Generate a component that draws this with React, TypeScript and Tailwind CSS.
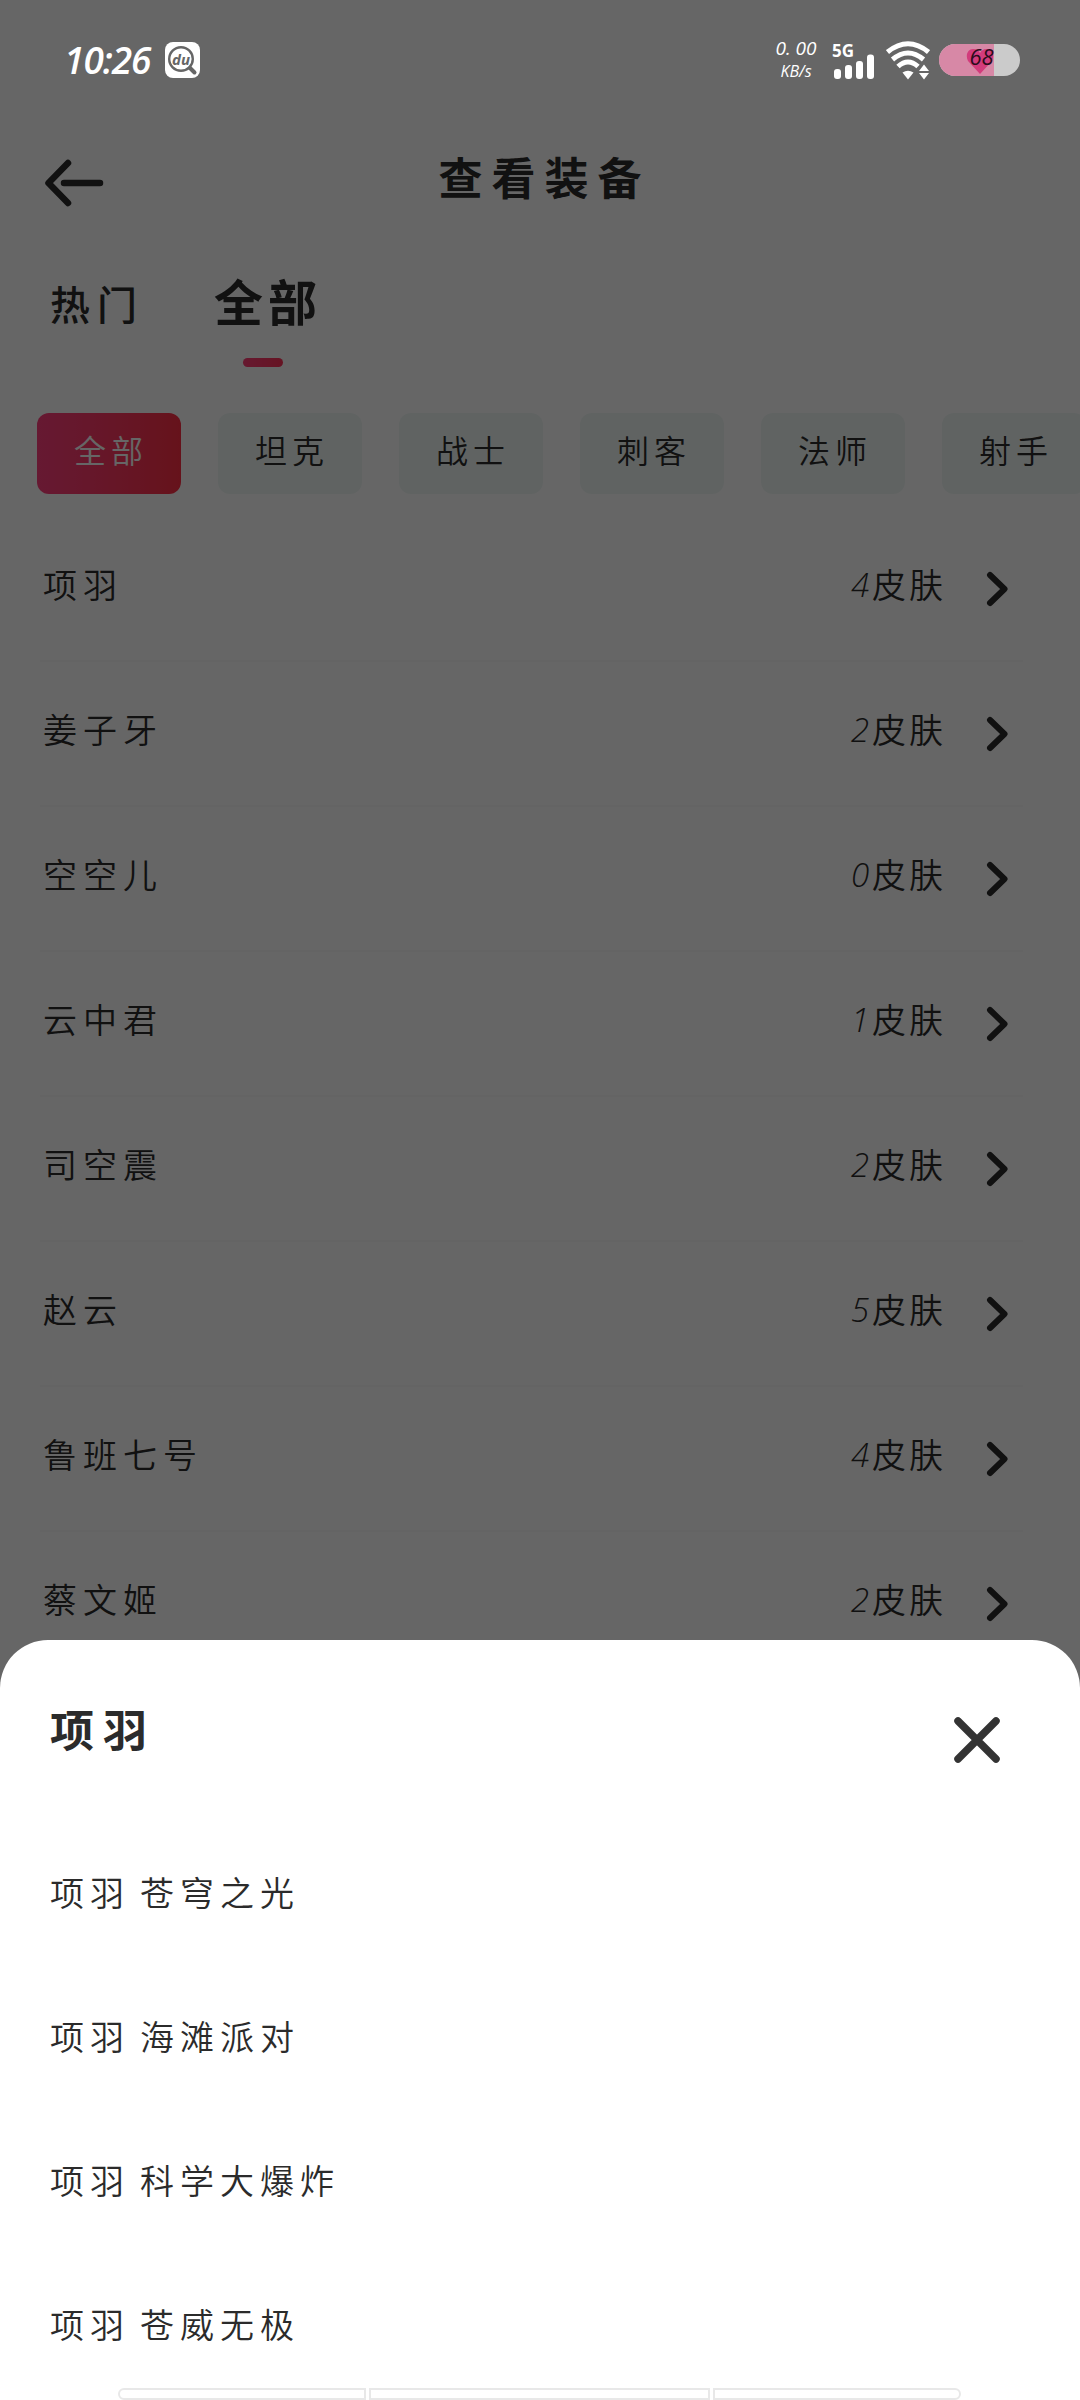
import { clsx } from "clsx";

const tags = ["全部", "坦克", "战士", "刺客", "法师", "射手"];

const heroes = [
  { name: "项羽", skins: 4 },
  { name: "姜子牙", skins: 2 },
  { name: "空空儿", skins: 0 },
  { name: "云中君", skins: 1 },
  { name: "司空震", skins: 2 },
  { name: "赵云", skins: 5 },
  { name: "鲁班七号", skins: 4 },
  { name: "蔡文姬", skins: 2 },
];

const skins = ["苍穹之光", "海滩派对", "科学大爆炸", "苍威无极"];

export default function App() {
  return (
    <div className="relative flex h-[2400px] w-[1080px] flex-col overflow-hidden bg-white font-['Noto_Sans_CJK_SC',sans-serif] text-[#2b2b2b]">
      <div className="h-[120px] shrink-0" />
      <Header />
      <Tabs />
      <TagBar />
      <HeroList />

      {/* dimmed backdrop, the status bar stays lit above it */}
      <div className="absolute inset-0 bg-black/60" />
      <StatusBar />
      <SkinSheet />
    </div>
  );
}

function StatusBar() {
  return (
    <div className="absolute inset-x-0 top-0 flex h-[120px] items-center justify-between pr-[60px] pl-[64px] text-white">
      <div className="flex items-center gap-[13px]">
        <span className="w-[88px] text-[37px] leading-[40px] font-semibold tracking-[-1px] whitespace-nowrap italic font-['Open_Sans',sans-serif]">
          10:26
        </span>
        <div className="relative flex h-[36px] w-[35px] items-center justify-center rounded-[8px] bg-white">
          <svg viewBox="0 0 35 36" className="absolute inset-0 size-full">
            <circle cx="16" cy="17" r="11.8" fill="none" stroke="#666" strokeWidth="2.4" />
            <path d="M25 26l4.500 4.500" stroke="#666" strokeWidth="4" strokeLinecap="round" />
          </svg>
          <span className="relative -top-[1px] -left-[1.5px] text-[15px] leading-[20px] font-bold text-[#666] italic font-['Open_Sans',sans-serif]">
            du
          </span>
        </div>
      </div>

      <div className="flex items-center">
        <div className="flex w-[44px] flex-col items-center pb-[2px] font-medium italic font-['Open_Sans',sans-serif]">
          <span className="text-[19px] leading-[23px] whitespace-nowrap">0. 00</span>
          <span className="text-[16px] leading-[22px] whitespace-nowrap">KB/s</span>
        </div>
        <div className="mt-[-1px] ml-[14px] flex w-[44px] flex-col">
          <span className="-mb-[9px] text-[17px] leading-[24px] font-bold font-['Open_Sans',sans-serif]">
            5G
          </span>
          <svg viewBox="0 0 44 26" className="h-[26px] w-[44px]" fill="#fff">
            <rect x="2" y="15" width="7" height="10" rx="3" />
            <rect x="13" y="11" width="7" height="14" rx="3" />
            <rect x="24" y="7" width="7" height="18" rx="3" />
            <rect x="35" y="0.500" width="7" height="24.500" rx="3" />
          </svg>
        </div>
        <svg viewBox="0 0 44 40" className="ml-[10px] h-[40px] w-[44px]" fill="none" stroke="#fff" strokeWidth="5">
          <path d="M1.500 12Q22 -4.500 42.500 12" />
          <path d="M6.500 19.500Q22 6.500 37.500 19.500" />
          <path d="M12 26.500Q22 17.500 32 26.500" />
          <path d="M16.500 32.500Q22 29 27.500 32.500L22 39.500z" fill="#fff" stroke="none" />
          <path d="M38 24.500l5 6.500h-10zM38 39.500l5-6.500h-10z" fill="#fff" stroke="none" />
        </svg>
        <div className="relative ml-[9px] flex h-[32px] w-[81px] items-center justify-center rounded-full bg-[#cbcbcb]">
          <div className="absolute inset-y-0 left-0 w-[55px] rounded-l-full bg-[#d788a6]" />
          <svg viewBox="0 0 28 26" className="absolute top-[4px] left-[27px] h-[26px] w-[28px]">
            <path d="M14 26L2 13C-1 7 2 1 7 1c4 0 6 2 7 4 1-2 3-4 7-4 5 0 8 6 5 12z" fill="#d23c7c" />
          </svg>
          <span className="relative -top-[4px] left-[2px] text-[22px] leading-[30px] text-[#2b0c1c] italic font-['Open_Sans',sans-serif]">
            68
          </span>
        </div>
      </div>
    </div>
  );
}

function Header() {
  return (
    <header className="flex h-[126px] shrink-0 items-center justify-between px-[44px]">
      <svg
        viewBox="0 0 60 48"
        className="h-[48px] w-[60px]"
        fill="none"
        stroke="currentColor"
        strokeWidth="6.500"
        strokeLinecap="round"
        strokeLinejoin="round"
      >
        <path d="M24 4L4.500 24L24 44M20 24h36" />
      </svg>
      <h1 className="pb-[15px] pl-[9px] text-[44px] leading-none font-bold tracking-[9px]">查看装备</h1>
      <div className="w-[60px]" />
    </header>
  );
}

function Tabs() {
  return (
    <nav className="flex h-[167px] shrink-0 gap-[70px] pt-[26px] pl-[50px]">
      <span className="pt-[5px] text-[40px] leading-[52px] font-medium tracking-[7px]">热门</span>
      <div className="flex flex-col items-center">
        <span className="text-[49px] leading-[56px] font-bold tracking-[5px]">全部</span>
        <span className="mt-[30px] mr-[11px] h-[9px] w-[40px] rounded-full bg-linear-to-r from-[#ff3f77] to-[#ff3258]" />
      </div>
    </nav>
  );
}

function TagBar() {
  return (
    <div className="flex shrink-0 gap-[37px] pl-[37px]">
      {tags.map((tag, i) => (
        <span
          key={tag}
          className={clsx(
            "flex h-[81px] w-[144px] shrink-0 items-center justify-center rounded-[12px] pb-[9px] pl-[4px] text-[32px] leading-none font-[350] tracking-[5px]",
            i === 0
              ? "bg-linear-to-r from-[#ff3f7e] to-[#ff2f44] text-white"
              : "bg-[#f0f8f6]",
          )}
        >
          {tag}
        </span>
      ))}
    </div>
  );
}

function HeroList() {
  return (
    <ul className="flex flex-col pt-[23px] pr-[57px] pl-[40px]">
      {heroes.map((hero) => (
        <li
          key={hero.name}
          className="flex h-[145px] shrink-0 items-center border-b-2 border-[#fafafa] pr-[13px] text-[34px] leading-none font-[350]"
        >
          <span className="grow pb-[9px] pl-[3px] tracking-[6px]">{hero.name}</span>
          <span className="flex items-center pb-[9px] tracking-[3px]">
            <span className="w-[21px] text-[33px] tracking-normal italic font-['Open_Sans',sans-serif]">
              {hero.skins}
            </span>
            皮肤
          </span>
          <svg
            viewBox="0 0 24 36"
            className="ml-[40px] h-[36px] w-[24px]"
            fill="none"
            stroke="currentColor"
            strokeWidth="6"
            strokeLinecap="round"
            strokeLinejoin="round"
          >
            <path d="M4 4l14.500 14L4 32" />
          </svg>
        </li>
      ))}
    </ul>
  );
}

function SkinSheet() {
  return (
    <section className="absolute inset-x-0 top-[1640px] bottom-0 flex flex-col rounded-t-[48px] bg-white text-[#2b2b2b]">
      <div className="flex h-[180px] shrink-0 items-center justify-between pt-[20px] pr-[79px] pl-[50px]">
        <h2 className="pb-[25px] text-[44px] leading-none font-bold tracking-[9px]">项羽</h2>
        <svg
          viewBox="0 0 48 48"
          className="size-[48px]"
          stroke="#333"
          strokeWidth="7.500"
          strokeLinecap="round"
        >
          <path d="M5 5l38 38M43 5L5 43" />
        </svg>
      </div>
      <ul className="flex flex-col">
        {skins.map((skin) => (
          <li
            key={skin}
            className="flex h-[144px] shrink-0 items-center gap-[10px] pl-[50px] text-[34px] leading-none font-[350] tracking-[6px]"
          >
            <span>项羽</span>
            <span>{skin}</span>
          </li>
        ))}
      </ul>
      {/* gesture bar */}
      <div className="absolute bottom-0 left-[118px] flex h-[12px] gap-[3px]">
        <span className="w-[248px] rounded-l-[6px] border-2 border-[#e8e8e8]" />
        <span className="w-[341px] border-2 border-[#e8e8e8]" />
        <span className="w-[248px] rounded-r-[6px] border-2 border-[#e8e8e8]" />
      </div>
    </section>
  );
}
